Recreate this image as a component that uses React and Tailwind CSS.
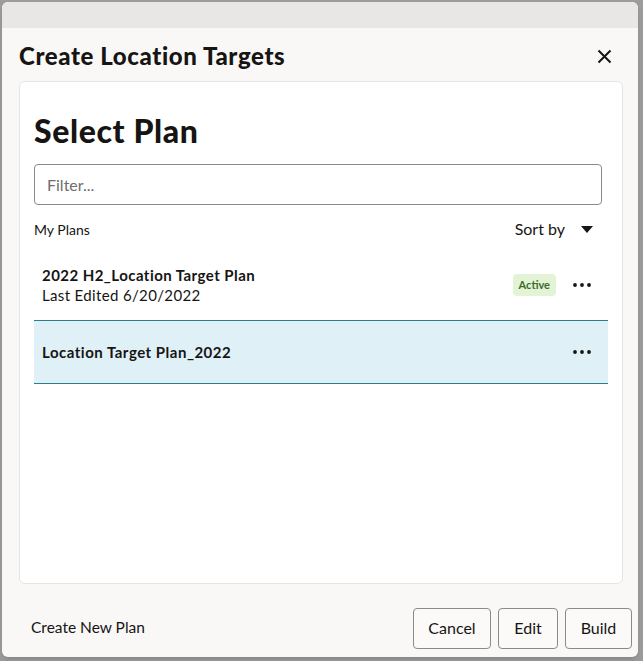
import React from "react";

function Dots() {
  return (
    <svg width="20" height="6" viewBox="0 0 20 6" className="block">
      <circle cx="3" cy="3" r="1.9" fill="#161513" />
      <circle cx="10" cy="3" r="1.9" fill="#161513" />
      <circle cx="17" cy="3" r="1.9" fill="#161513" />
    </svg>
  );
}

export default function App() {
  return (
    <div
      className="w-[643px] h-[661px] bg-[#9c9c9c] pl-[2px] pt-[2px] overflow-hidden"
      style={{ fontFamily: "Lato, 'Liberation Sans', sans-serif" }}
    >
      <div className="w-[636px] h-[655px] bg-[#f9f8f6] rounded-[6px] overflow-hidden flex flex-col text-[#161513] shadow-md">
        <div className="h-[26px] bg-[#e8e7e5] shrink-0" />
        <div className="h-[53px] shrink-0 flex items-center justify-between pl-[17px] pr-[26px] pt-[3px]">
          <h1 className="text-[24px] font-black tracking-[0.6px]">Create Location Targets</h1>
          <svg width="15" height="15" viewBox="0 0 15 15">
            <path d="M1.5 1.5 L13.5 13.5 M13.5 1.5 L1.5 13.5" stroke="#161513" strokeWidth="2" />
          </svg>
        </div>
        <div className="ml-[17px] mr-[15px] h-[503px] bg-white border border-[#e6e5e3] rounded-[6px] px-[14px] flex flex-col shrink-0">
          <h2 className="mt-[31px] h-[36px] leading-[36px] text-[32px] font-black tracking-[0.6px]">Select Plan</h2>
          <div className="mt-[15px] mr-[6px] h-[41px] border border-[#8b8a88] rounded-[4px] flex items-center pl-[12px] text-[16px] text-[#6f6e6c]">
            Filter...
          </div>
          <div className="mt-[14px] h-[20px] flex items-center justify-between pr-[15px]">
            <span className="text-[14px]">My Plans</span>
            <div className="flex items-center gap-[16px]">
              <span className="text-[16px]">Sort by</span>
              <svg width="12" height="7" viewBox="0 0 12 7">
                <path d="M0 0 H12 L6 7 Z" fill="#161513" />
              </svg>
            </div>
          </div>
          <div className="mt-[11px] h-[70px] flex items-center justify-between pl-[8px] pr-[16px]">
            <div className="flex flex-col">
              <span className="text-[15px] font-bold leading-[20px] tracking-[0.45px]">2022 H2_Location Target Plan</span>
              <span className="text-[15px] leading-[20px] tracking-[0.35px]">Last Edited 6/20/2022</span>
            </div>
            <div className="flex items-center gap-[16px]">
              <span className="h-[22px] px-[6px] rounded-[4px] bg-[#e2f3d6] text-[#3d6b2a] text-[11px] font-bold flex items-center">
                Active
              </span>
              <Dots />
            </div>
          </div>
          <div className="h-[64px] bg-[#e0f0f7] border-y border-[#2a7f8f] flex items-center justify-between pl-[8px] pr-[16px]">
            <span className="text-[15px] font-bold tracking-[0.5px]">Location Target Plan_2022</span>
            <Dots />
          </div>
        </div>
        <div className="flex-1 flex items-center justify-between pl-[29px] pr-[6px] pt-[15px]">
          <span className="text-[15.5px]">Create New Plan</span>
          <div className="flex gap-[7px]">
            <button className="h-[41px] w-[78px] border border-[#8b8a88] rounded-[4px] bg-[#fbfaf9] text-[16px]">Cancel</button>
            <button className="h-[41px] w-[60px] border border-[#8b8a88] rounded-[4px] bg-[#fbfaf9] text-[16px]">Edit</button>
            <button className="h-[41px] w-[67px] border border-[#8b8a88] rounded-[4px] bg-[#fbfaf9] text-[16px]">Build</button>
          </div>
        </div>
      </div>
    </div>
  );
}
